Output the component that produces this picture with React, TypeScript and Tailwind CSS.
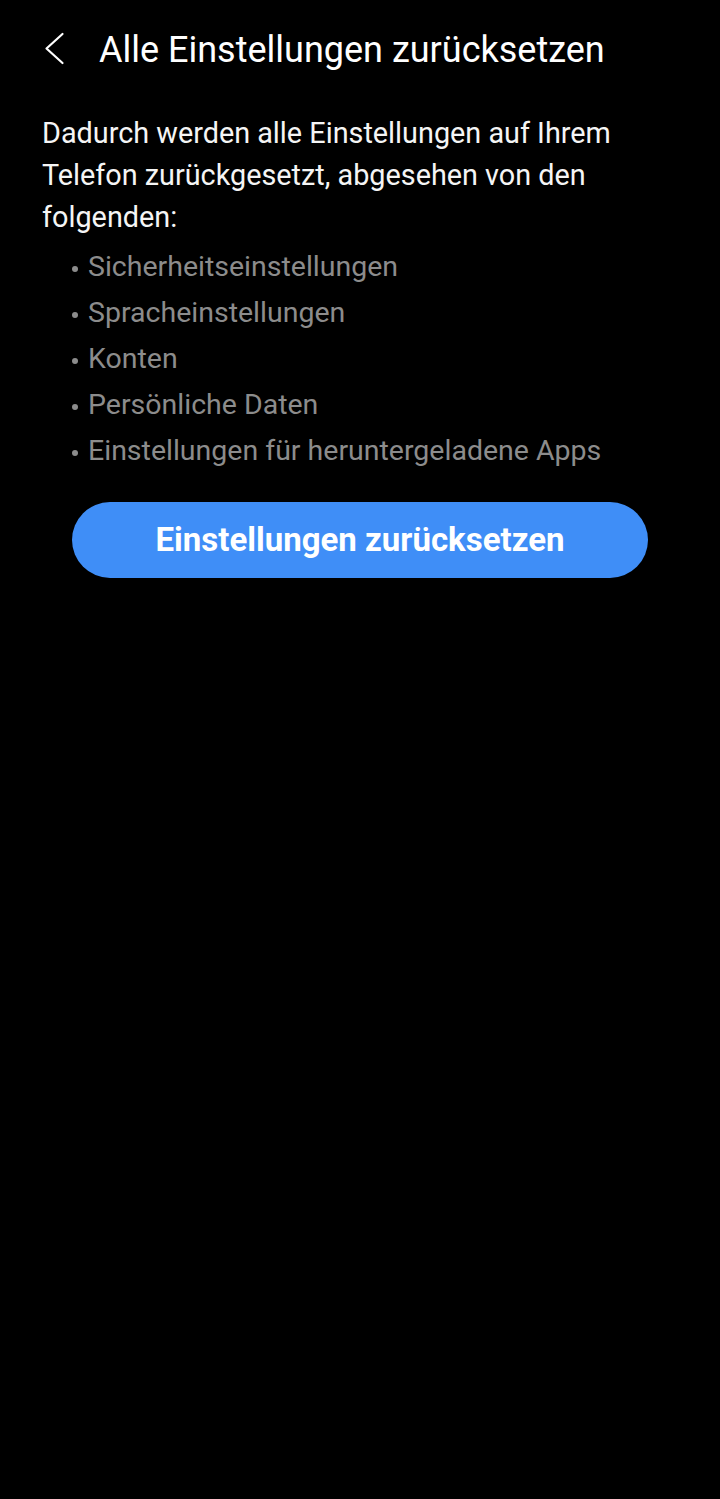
import React from 'react';

const items = [
  'Sicherheitseinstellungen',
  'Spracheinstellungen',
  'Konten',
  'Persönliche Daten',
  'Einstellungen für heruntergeladene Apps',
];

export default function App() {
  return (
    <div className="min-h-[1499px] w-[720px] bg-black text-white font-['Roboto','Noto_Sans',sans-serif]">
      <header className="flex h-[100px] items-center pl-[44px]">
        <svg width="22" height="34" viewBox="0 0 22 34" className="shrink-0 -translate-y-[1px]">
          <path d="M18.5 2 L2.5 16.5 L18.5 31" fill="none" stroke="#fff" strokeWidth="2.2" strokeLinecap="round" strokeLinejoin="round" />
        </svg>
        <h1 className="ml-[33px] text-[36px] font-normal text-white">Alle Einstellungen zurücksetzen</h1>
      </header>

      <main className="px-[42px] pt-[12px]">
        <p className="text-[28.8px] leading-[42px] text-[#f5f5f5]">
          Dadurch werden alle Einstellungen auf Ihrem Telefon zurückgesetzt, abgesehen von den folgenden:
        </p>
        <ul className="mt-[6px] pl-[30px]">
          {items.map((item) => (
            <li key={item} className="flex items-center text-[28.5px] leading-[46px] text-[#8c8c8c]">
              <span className="mr-[10px] mt-[3px] h-[6px] w-[6px] shrink-0 rounded-full bg-[#8c8c8c]" />
              {item}
            </li>
          ))}
        </ul>
        <div className="mt-[28px] flex justify-center">
          <button className="h-[76px] w-[576px] rounded-full bg-[#3f8ef7] text-[33px] font-bold text-white">
            Einstellungen zurücksetzen
          </button>
        </div>
      </main>
    </div>
  );
}
